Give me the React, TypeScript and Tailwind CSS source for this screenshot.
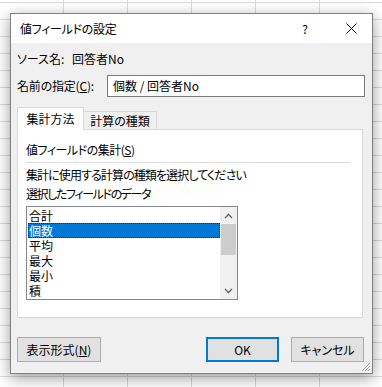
import React from 'react';

const items = ['合計', '個数', '平均', '最大', '最小', '積'];

function Chevron({ up }: { up?: boolean }) {
  return (
    <svg width="9" height="6" viewBox="0 0 9 6" className="block">
      <polyline
        points={up ? '1,5 4.5,1.5 8,5' : '1,1 4.5,4.5 8,1'}
        fill="none"
        stroke="#606060"
        strokeWidth="1.3"
      />
    </svg>
  );
}

function Button({ label, mnemonic, rest, primary }: { label: string; mnemonic?: string; rest?: string; primary?: boolean }) {
  return (
    <button
      className={
        primary
          ? 'h-[25px] w-[73px] bg-[#e1e1e1] border-2 border-[#0078d7] flex items-center justify-center'
          : 'h-[25px] w-[73px] bg-[#e1e1e1] border border-[#adadad] flex items-center justify-center'
      }
    >
      {label}
      {mnemonic && <u>{mnemonic}</u>}
      {rest}
    </button>
  );
}

export default function App() {
  return (
    <div className="w-[382px] h-[387px] overflow-hidden bg-white bg-[linear-gradient(to_right,#dadada_1px,transparent_1px),linear-gradient(to_bottom,#dadada_1px,transparent_1px)] bg-size-[64px_17px] bg-position-[63px_2px] pt-[13px] pl-[10px] text-[12px] text-black font-['Noto_Sans_CJK_JP',sans-serif] [font-feature-settings:'palt']">
      <div className="w-[363px] h-[361px] border border-[#808080] bg-[#f0f0f0] flex flex-col shadow-[0_4px_14px_rgba(0,0,0,0.4)]">
        {/* title bar */}
        <div className="h-[30px] bg-white flex items-center pl-[9px]">
          <span className="flex-1 tracking-[-0.3px]">値フィールドの設定</span>
          <span className="w-[14px] text-center mr-[34px]">?</span>
          <svg width="11" height="11" viewBox="0 0 11 11" className="mr-[15px]">
            <path d="M0.5 0.5 L10.5 10.5 M10.5 0.5 L0.5 10.5" stroke="#000" strokeWidth="1" />
          </svg>
        </div>

        <div className="flex-1 flex flex-col px-[6px]">
          <div className="h-[20px] mt-[6px] flex items-center">
            <span className="w-[55px]">ソース名:</span>
            <span>回答者No</span>
          </div>
          <div className="h-[22px] mt-[6px] flex items-center">
            <span className="w-[90px] tracking-[-0.2px]">
              名前の指定(<u>C</u>):
            </span>
            <div className="w-[258px] h-[22px] bg-white border border-[#7a7a7a] flex items-center pl-[5px]">
              個数 / 回答者No
            </div>
          </div>

          {/* tabs */}
          <div className="mt-[10px] flex items-end h-[23px] relative z-10">
            <div className="h-[23px] w-[67px] bg-white border border-b-0 border-[#d9d9d9] flex items-center justify-center pb-[1px]">
              集計方法
            </div>
            <div className="h-[19px] w-[73px] border border-l-0 border-b-0 border-[#d9d9d9] flex items-center justify-center">
              計算の種類
            </div>
          </div>
          <div className="-mt-px h-[189px] w-[346px] bg-white border border-[#d9d9d9] px-[8px] flex flex-col">
            <div className="h-[18px] mt-[11px] flex items-center tracking-[-0.5px]">
              値フィールドの集計(<u>S</u>)
            </div>
            <div className="h-px bg-[#d9d9d9] mt-[3px] mr-[4px]" />
            <div className="h-[18px] mt-[3px] flex items-center tracking-[-0.9px]">
              集計に使用する計算の種類を選択してください
            </div>
            <div className="h-[18px] mt-[1px] flex items-center tracking-[-1.4px]">選択したフィールドのデータ</div>
            <div className="mt-[3px] w-[212px] h-[94px] border border-[#828790] flex">
              <div className="flex-1 pt-[1px] pl-[1px]">
                {items.map((it, i) => (
                  <div
                    key={it}
                    className={
                      i === 1
                        ? 'h-[15px] leading-[15px] pl-[1px] bg-[#0078d7] text-white outline-1 outline-dotted outline-[#2a2a2a] -outline-offset-1'
                        : 'h-[15px] leading-[15px] pl-[1px]'
                    }
                  >
                    {it}
                  </div>
                ))}
              </div>
              <div className="w-[17px] bg-[#f0f0f0] flex flex-col items-center">
                <div className="h-[17px] flex items-center justify-center">
                  <Chevron up />
                </div>
                <div className="w-[15px] h-[31px] bg-[#cdcdcd]" />
                <div className="flex-1" />
                <div className="h-[17px] flex items-center justify-center">
                  <Chevron />
                </div>
              </div>
            </div>
          </div>

          {/* buttons */}
          <div className="mt-[19px] flex items-center pr-[2px]">
            <button className="h-[25px] w-[84px] bg-[#e1e1e1] border border-[#adadad] flex items-center justify-center">
              表示形式(<u>N</u>)
            </button>
            <div className="flex-1" />
            <Button label="OK" primary />
            <div className="w-[12px]" />
            <Button label="キャンセル" />
          </div>
          <div className="flex-1 flex justify-end items-end pb-[1px] -mr-[5px]">
            <svg width="10" height="10" viewBox="0 0 10 10">
              <path d="M9 1 L1 9 M9 4 L4 9 M9 7 L7 9" stroke="#a0a0a0" strokeWidth="1" />
            </svg>
          </div>
        </div>
      </div>
    </div>
  );
}
